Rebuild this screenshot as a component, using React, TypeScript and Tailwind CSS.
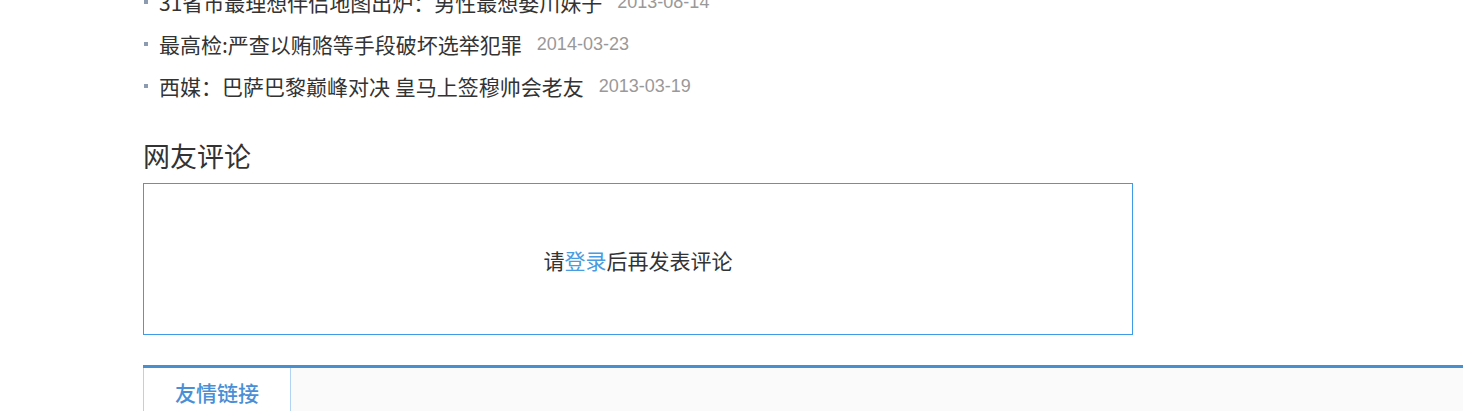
import React from "react";

const items = [
  { t: "31省市最理想伴侣地图出炉：男性最想娶川妹子", d: "2013-08-14" },
  { t: "最高检:严查以贿赂等手段破坏选举犯罪", d: "2014-03-23" },
  { t: "西媒：巴萨巴黎巅峰对决 皇马上签穆帅会老友", d: "2013-03-19" },
];

export default function App() {
  return (
    <div
      className="w-[1463px] h-[411px] overflow-hidden bg-white pl-[143px]"
      style={{ fontFamily: '"Noto Sans CJK SC", "Liberation Sans", sans-serif' }}
    >
      <ul className="mt-[-19px]">
        {items.map((it) => (
          <li key={it.d} className="flex items-center h-[42px]">
            <span className="w-[4px] h-[4px] ml-[1px] bg-[#8c9bb0] mr-[11px]" />
            <span className="text-[21px] text-[#333] leading-none">{it.t}</span>
            <span
              className="ml-[15px] text-[18px] text-[#999] leading-none"
              style={{ fontFamily: '"Liberation Sans", sans-serif' }}
            >
              {it.d}
            </span>
          </li>
        ))}
      </ul>
      <h2 className="mt-[31px] h-[36px] leading-[36px] text-[27px] text-[#333] font-normal">网友评论</h2>
      <div className="mt-[9px] w-[990px] h-[152px] border border-[#3f9be6] flex items-center justify-center pt-[3px]">
        <span className="text-[21px] text-[#333]">
          请<span className="text-[#4a9ce0]">登录</span>后再发表评论
        </span>
      </div>
      <div className="mt-[30px] border-t-[3px] border-[#4a8fcd] bg-[#fafafa] flex">
        <div className="w-[148px] h-[48px] bg-white border-l border-r border-[#b3d3f3] flex items-center justify-center">
          <span className="text-[21px] text-[#4a8fd6] font-medium leading-none">友情链接</span>
        </div>
      </div>
    </div>
  );
}
